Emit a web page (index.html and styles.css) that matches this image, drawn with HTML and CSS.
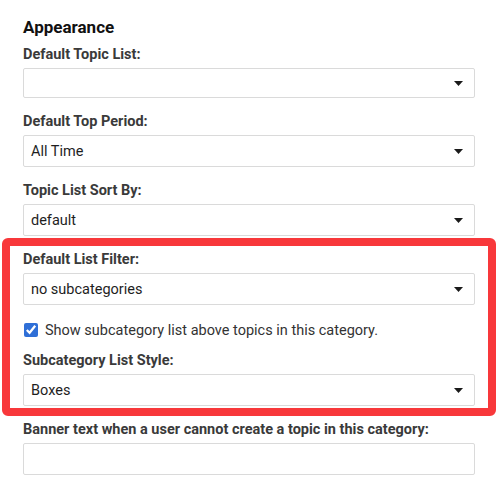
FILE: index.html
```html
<!DOCTYPE html>
<html lang="en">
<head>
<meta charset="utf-8">
<title>Category settings</title>
<link rel="stylesheet" href="styles.css">
</head>
<body>
<section class="settings">
  <h3 class="settings-title">Appearance</h3>

  <div class="field">
    <label class="field-label">Default Topic List:</label>
    <div class="select select-empty"><span class="select-value"></span>
      <svg class="caret" width="9" height="5" viewBox="0 0 9 5"><path d="M0 0h9L4.5 5z"/></svg></div>
  </div>

  <div class="field">
    <label class="field-label">Default Top Period:</label>
    <div class="select"><span class="select-value">All Time</span>
      <svg class="caret" width="9" height="5" viewBox="0 0 9 5"><path d="M0 0h9L4.5 5z"/></svg></div>
  </div>

  <div class="field">
    <label class="field-label">Topic List Sort By:</label>
    <div class="select"><span class="select-value">default</span>
      <svg class="caret" width="9" height="5" viewBox="0 0 9 5"><path d="M0 0h9L4.5 5z"/></svg></div>
  </div>

  <div class="group highlighted">
    <div class="field">
      <label class="field-label">Default List Filter:</label>
      <div class="select"><span class="select-value">no subcategories</span>
        <svg class="caret" width="9" height="5" viewBox="0 0 9 5"><path d="M0 0h9L4.5 5z"/></svg></div>
    </div>

    <label class="check-row">
      <input type="checkbox" class="check" checked>
      <span>Show subcategory list above topics in this category.</span>
    </label>

    <div class="field field-last">
      <label class="field-label">Subcategory List Style:</label>
      <div class="select"><span class="select-value">Boxes</span>
        <svg class="caret" width="9" height="5" viewBox="0 0 9 5"><path d="M0 0h9L4.5 5z"/></svg></div>
    </div>
  </div>

  <div class="field">
    <label class="field-label">Banner text when a user cannot create a topic in this category:</label>
    <div class="text-input"></div>
  </div>
</section>
</body>
</html>
```

FILE: styles.css
```css
html, body {
  margin: 0;
  padding: 0;
  background: #fff;
}

body {
  font-family: Roboto, "Liberation Sans", Arial, sans-serif;
  color: #222;
}

.settings {
  width: 452px;
  padding: 16px 0 0 23px;
}

.settings-title {
  margin: 0 0 7px;
  font-size: 17px;
  line-height: 22px;
  font-weight: 700;
  color: #111;
}

.field {
  margin-bottom: 14px;
}

.field-label {
  display: block;
  margin-bottom: 3px;
  font-size: 14.5px;
  line-height: 20px;
  font-weight: 700;
  color: #3a3a3a;
}

.select,
.text-input {
  box-sizing: border-box;
  height: 32px;
  border: 1px solid #dadada;
  border-radius: 2px;
  background: #fff;
}

.select {
  display: flex;
  align-items: center;
  justify-content: space-between;
  padding: 0 11px 0 7px;
}

.select-empty {
  height: 30px;
}

.select-value {
  font-size: 14.5px;
  color: #1e1e1e;
}

.caret {
  fill: #1a1a1a;
  flex: none;
}

/* Annotated group: red frame drawn around the fields */
.group {
  position: relative;
  margin-bottom: 14px;
}

.field-last {
  margin-bottom: 0;
}

.highlighted::before {
  content: "";
  position: absolute;
  top: -12px;
  bottom: -10px;
  left: -21px;
  right: -21px;
  border: 8px solid #f8383b;
  border-radius: 6px;
  pointer-events: none;
}

.check-row {
  display: flex;
  align-items: center;
  gap: 7px;
  height: 22px;
  margin: 0 0 10px;
  font-size: 14.5px;
  color: #333;
}

.check {
  width: 14px;
  height: 14px;
  margin: 0 0 0 1px;
  accent-color: #2f6fd7;
}
```
